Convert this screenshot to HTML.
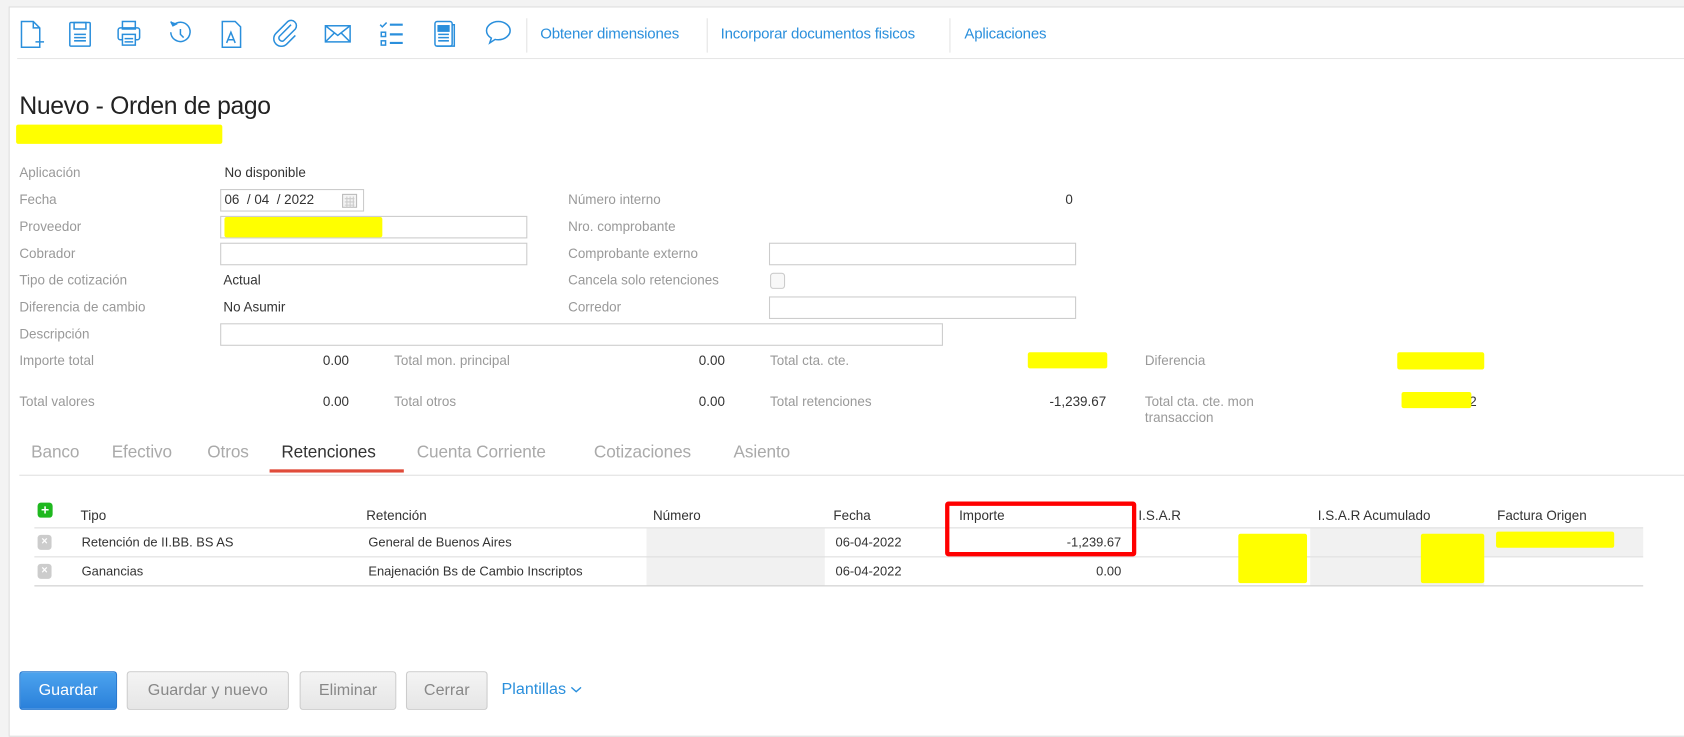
<!DOCTYPE html>
<html><head><meta charset="utf-8"><style>
*{margin:0;padding:0;box-sizing:border-box}
html,body{width:1684px;height:718px;overflow:hidden;background:#f3f3f3}
#w{position:absolute;left:0;top:0;width:1568px;height:669px;transform:scale(1.07398);transform-origin:0 0;font-family:"Liberation Sans",Arial,sans-serif;font-size:12.5px;color:#333}
.panel{position:absolute;left:8px;top:6px;width:1570px;height:680px;background:#fff;border:1px solid #ddd}
.a{position:absolute;white-space:nowrap}
.l{color:#999}
.r{text-align:right}
.in{position:absolute;border:1px solid #ccc;background:#fff;height:21px}
.y{position:absolute;background:#ffff00;border-radius:2px}
.lk{color:#2a8fdc;font-size:14px;letter-spacing:-0.2px}
.vd{position:absolute;width:1px;background:#e4e4e4;top:17px;height:32px}
.ic{position:absolute;top:17px}
.tab{position:absolute;top:413px;font-size:16px;color:#aaa;letter-spacing:-0.1px}
.th{position:absolute;top:473px}
.btn{position:absolute;top:625px;height:36px;border:1px solid #ccc;border-radius:3px;background:linear-gradient(#f4f4f4,#e6e6e6);color:#888;font-size:15px;text-align:center;line-height:34px}
.xb{position:absolute;left:35px;width:13px;height:14px;background:#ccc;border-radius:3px;color:#fff;font-size:10px;text-align:center;line-height:14px;font-weight:bold}
</style></head><body><div id="w">
<div class="panel"></div>
<svg class="ic" style="left:17px" width="480" height="30" viewBox="0 0 480 30" fill="none" stroke="#2a8fdc" stroke-width="1.4">
<path d="M3 3h11l6 6v18H3z M14 3v6h6"/><path d="M16 22h8M20 18v8" />
<g transform="translate(46,0)"><rect x="2" y="4" width="19" height="22" rx="1"/><rect x="6" y="4" width="11" height="6"/><path d="M6 15h11M6 18h11M6 21h11"/></g>
<g transform="translate(91,0)"><rect x="6" y="3" width="12" height="7"/><rect x="2" y="9" width="20" height="11" rx="2"/><rect x="6" y="15" width="12" height="10" fill="#fff"/><path d="M8 19h8M8 22h8"/></g>
<g transform="translate(137,0)"><path d="M7 7a9 9 0 1 1-2 6"/><path d="M5 3l2 4 4-2" fill="#2a8fdc"/><path d="M14 10v5l3 3"/></g>
<g transform="translate(188,0)"><path d="M2 3h12l5 5v19H2z"/><path d="M6 23l4-10 4 10M7 20h6"/></g>
<g transform="translate(236,0)"><path d="M18 6L7 17a3 3 0 0 0 4 4L22 10a5 5 0 0 0-7-7L4 14a7 7 0 0 0 10 10l8-8"/></g>
<g transform="translate(285,0)"><rect x="1" y="7" width="23" height="15"/><path d="M1 7l11.5 9L24 7M1 22l8-8M24 22l-8-8"/></g>
<g transform="translate(336,0)"><path d="M1 6l2 2 4-4"/><rect x="2" y="13" width="4" height="4"/><rect x="2" y="21" width="4" height="4"/><path d="M10 6h12M10 15h12M10 23h12" stroke-width="2"/></g>
<g transform="translate(386,0)"><rect x="2" y="3" width="16" height="23" rx="2"/><path d="M18 6h2v20H4" /><rect x="5" y="7" width="10" height="5" fill="#2a8fdc"/><path d="M5 15h10M5 18h10M5 21h10"/></g>
<g transform="translate(434,0)"><path d="M13 3c6 0 11 4 11 8.5S19 20 13 20c-1 0-2 0-3-.3L5 23l1.5-4.5C4 17 2 14.5 2 11.5 2 7 7 3 13 3z"/></g>
</svg>
<div class="vd" style="left:490px"></div><div class="vd" style="left:658px"></div><div class="vd" style="left:884px"></div>
<div class="a lk" style="left:503px;top:23px">Obtener dimensiones</div>
<div class="a lk" style="left:671px;top:23px">Incorporar documentos fisicos</div>
<div class="a lk" style="left:898px;top:23px">Aplicaciones</div>
<div class="a" style="left:16px;top:54px;width:1560px;height:1px;background:#e6e6e6"></div>
<div class="a" style="left:18px;top:85px;font-size:23px;color:#222;letter-spacing:-0.3px">Nuevo - Orden de pago</div>
<div class="y" style="left:15px;top:116px;width:192px;height:18px"></div>
<div class="a l" style="left:18px;top:154px">Aplicación</div><div class="a" style="left:209px;top:154px">No disponible</div>
<div class="a l" style="left:18px;top:179px">Fecha</div>
<div class="in" style="left:205px;top:176px;width:134px"></div>
<div class="a" style="left:209px;top:179px">06 &nbsp;/ 04 &nbsp;/ 2022</div>
<svg class="a" style="left:318px;top:179px" width="16" height="15"><rect x="1" y="2" width="13" height="12" fill="#f4f4f4" stroke="#bbb"/><path d="M3 6h9M3 9h9M3 12h9M5 4v10M8 4v10M11 4v10" stroke="#ccc"/></svg>
<div class="a l" style="left:18px;top:204px">Proveedor</div><div class="in" style="left:205px;top:201px;width:286px"></div>
<div class="y" style="left:209px;top:202px;width:147px;height:19px"></div>
<div class="a l" style="left:18px;top:229px">Cobrador</div><div class="in" style="left:205px;top:226px;width:286px"></div>
<div class="a l" style="left:18px;top:254px">Tipo de cotización</div><div class="a" style="left:208px;top:254px">Actual</div>
<div class="a l" style="left:18px;top:279px">Diferencia de cambio</div><div class="a" style="left:208px;top:279px">No Asumir</div>
<div class="a l" style="left:18px;top:304px">Descripción</div><div class="in" style="left:205px;top:301px;width:673px"></div>
<div class="a l" style="left:529px;top:179px">Número interno</div><div class="a" style="left:992px;top:179px">0</div>
<div class="a l" style="left:529px;top:204px">Nro. comprobante</div>
<div class="a l" style="left:529px;top:229px">Comprobante externo</div><div class="in" style="left:716px;top:226px;width:286px"></div>
<div class="a l" style="left:529px;top:254px">Cancela solo retenciones</div>
<div class="a" style="left:717px;top:254px;width:14px;height:15px;border:1px solid #ccc;border-radius:3px;background:#f8f8f8"></div>
<div class="a l" style="left:529px;top:279px">Corredor</div><div class="in" style="left:716px;top:276px;width:286px"></div>
<div class="a l" style="left:18px;top:329px">Importe total</div><div class="a r" style="left:245px;width:80px;top:329px">0.00</div>
<div class="a l" style="left:367px;top:329px">Total mon. principal</div><div class="a r" style="left:595px;width:80px;top:329px">0.00</div>
<div class="a l" style="left:717px;top:329px">Total cta. cte.</div><div class="y" style="left:957px;top:328px;width:74px;height:15px"></div>
<div class="a l" style="left:1066px;top:329px">Diferencia</div><div class="y" style="left:1301px;top:328px;width:81px;height:16px"></div>
<div class="a l" style="left:18px;top:367px">Total valores</div><div class="a r" style="left:245px;width:80px;top:367px">0.00</div>
<div class="a l" style="left:367px;top:367px">Total otros</div><div class="a r" style="left:595px;width:80px;top:367px">0.00</div>
<div class="a l" style="left:717px;top:367px">Total retenciones</div><div class="a r" style="left:930px;width:100px;top:367px">-1,239.67</div>
<div class="a l" style="left:1066px;top:367px;line-height:15px">Total cta. cte. mon<br>transaccion</div>
<div class="a" style="left:1368px;top:367px">2</div><div class="y" style="left:1305px;top:365px;width:65px;height:15px"></div>
<div class="tab" style="left:29px">Banco</div><div class="tab" style="left:104px">Efectivo</div><div class="tab" style="left:193px">Otros</div>
<div class="tab" style="left:262px;color:#333">Retenciones</div><div class="tab" style="left:388px">Cuenta Corriente</div>
<div class="tab" style="left:553px">Cotizaciones</div><div class="tab" style="left:683px">Asiento</div>
<div class="a" style="left:18px;top:442px;width:1560px;height:1px;background:#e0e0e0"></div>
<div class="a" style="left:251px;top:437px;width:125px;height:3px;background:#e04b3a"></div>
<div class="a" style="left:35px;top:468px;width:14px;height:14px;background:#1fb81f;border-radius:3px;color:#fff;font-weight:bold;font-size:13px;line-height:14px;text-align:center">+</div>
<div class="th" style="left:75px">Tipo</div><div class="th" style="left:341px">Retención</div><div class="th" style="left:608px">Número</div>
<div class="th" style="left:776px">Fecha</div><div class="th" style="left:893px">Importe</div><div class="th" style="left:1060px">I.S.A.R</div>
<div class="th" style="left:1227px">I.S.A.R Acumulado</div><div class="th" style="left:1394px">Factura Origen</div>
<div class="a" style="left:602px;top:492px;width:166px;height:53px;background:#f1f1f1"></div>
<div class="a" style="left:1220px;top:492px;width:310px;height:26px;background:#f1f1f1"></div>
<div class="a" style="left:1220px;top:519px;width:162px;height:26px;background:#f1f1f1"></div>
<div class="a" style="left:32px;top:491px;width:1498px;height:1px;background:#ddd"></div>
<div class="a" style="left:32px;top:518px;width:1498px;height:1px;background:#ddd"></div>
<div class="a" style="left:32px;top:545px;width:1498px;height:1px;background:#ccc"></div>
<div class="xb" style="top:498px">×</div><div class="xb" style="top:525px">×</div>
<div class="a" style="left:76px;top:498px;font-size:12px">Retención de II.BB. BS AS</div>
<div class="a" style="left:343px;top:498px;font-size:12px">General de Buenos Aires</div>
<div class="a" style="left:778px;top:498px;font-size:12px">06-04-2022</div>
<div class="a r" style="left:944px;width:100px;top:498px;font-size:12px">-1,239.67</div>
<div class="a" style="left:76px;top:525px;font-size:12px">Ganancias</div>
<div class="a" style="left:343px;top:525px;font-size:12px">Enajenación Bs de Cambio Inscriptos</div>
<div class="a" style="left:778px;top:525px;font-size:12px">06-04-2022</div>
<div class="a r" style="left:944px;width:100px;top:525px;font-size:12px">0.00</div>
<div class="y" style="left:1153px;top:497px;width:64px;height:46px"></div>
<div class="y" style="left:1323px;top:497px;width:59px;height:46px"></div>
<div class="y" style="left:1393px;top:495px;width:110px;height:15px"></div>
<div class="a" style="left:880px;top:467px;width:178px;height:51px;border:4px solid #f00;border-radius:3px"></div>
<div class="btn" style="left:18px;width:91px;background:linear-gradient(#4ca3ee,#2a80da);border-color:#2a7ad0;color:#fff">Guardar</div>
<div class="btn" style="left:118px;width:151px">Guardar y nuevo</div>
<div class="btn" style="left:279px;width:90px">Eliminar</div>
<div class="btn" style="left:378px;width:76px">Cerrar</div>
<div class="a" style="left:467px;top:633px;font-size:15px;color:#2a8fdc">Plantillas <svg width="11" height="8" viewBox="0 0 11 8"><path d="M1 2l4.5 4L10 2" fill="none" stroke="#2a8fdc" stroke-width="1.3"/></svg></div>
</div></body></html>
